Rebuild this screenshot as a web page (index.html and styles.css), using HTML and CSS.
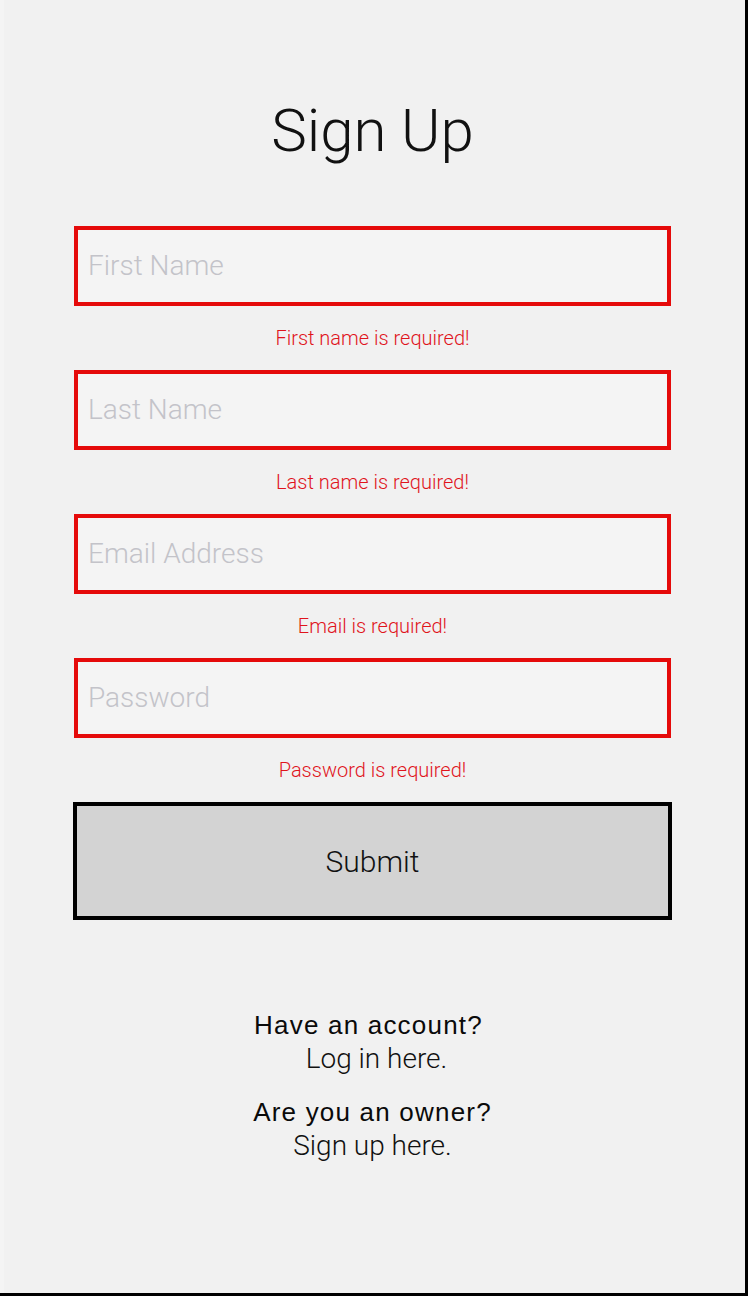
FILE: index.html
```html
<!DOCTYPE html>
<html lang="en">
<head>
<meta charset="utf-8">
<title>Sign Up</title>
<link rel="stylesheet" href="styles.css">
</head>
<body>
<div class="screen">
  <h1 class="title">Sign Up</h1>
  <form class="form" novalidate>
    <div class="field">
      <input class="input" type="text" placeholder="First Name">
      <p class="error">First name is required!</p>
    </div>
    <div class="field">
      <input class="input" type="text" placeholder="Last Name">
      <p class="error">Last name is required!</p>
    </div>
    <div class="field">
      <input class="input" type="email" placeholder="Email Address">
      <p class="error">Email is required!</p>
    </div>
    <div class="field">
      <input class="input" type="password" placeholder="Password">
      <p class="error">Password is required!</p>
    </div>
    <button class="submit" type="button">Submit</button>
  </form>
  <div class="links">
    <div class="link-group">
      <p class="question question-login">Have an account?</p>
      <a class="link link-login" href="#">Log in here.</a>
    </div>
    <div class="link-group">
      <p class="question">Are you an owner?</p>
      <a class="link" href="#">Sign up here.</a>
    </div>
  </div>
</div>
</body>
</html>
```
FILE: styles.css
```css
html, body {
  margin: 0;
  padding: 0;
  background: #000;
}
body {
  width: 748px;
  height: 1296px;
  overflow: hidden;
}
.screen {
  box-sizing: border-box;
  width: 745px;
  height: 1293px;
  background: #f1f1f1;
  border-left: 4px solid #f4f4f4;
  display: flex;
  flex-direction: column;
  align-items: center;
  font-family: Roboto, "Liberation Sans", sans-serif;
  font-weight: 300;
  color: #111;
}
.title {
  margin: 96px 0 0 0;
  font-size: 60px;
  line-height: 70px;
  font-weight: 300;
  color: #111;
  transform: translateX(-2px);
}
.form {
  margin-top: 60px;
  display: flex;
  flex-direction: column;
  align-items: center;
  width: 599px;
  transform: translateX(-2px);
}
.field {
  display: flex;
  flex-direction: column;
  align-items: center;
  width: 597px;
}
.input {
  box-sizing: border-box;
  width: 597px;
  height: 80px;
  margin: 0;
  border: 4px solid #e50a0a;
  background: #f4f4f4;
  padding: 0 10px 2px;
  font-family: Roboto, sans-serif;
  font-weight: 300;
  font-size: 28px;
  color: #111;
  outline: none;
  border-radius: 0;
}
.input::placeholder {
  color: #c3c3c9;
}
.error {
  margin: 0;
  height: 64px;
  line-height: 64px;
  font-size: 20px;
  font-weight: 300;
  color: #e0141c;
}
.submit {
  box-sizing: border-box;
  width: 599px;
  height: 118px;
  margin: 0;
  border: 4px solid #000;
  background: #d3d3d3;
  font-family: Roboto, sans-serif;
  font-weight: 300;
  font-size: 30px;
  color: #111;
  border-radius: 0;
  padding: 0;
}
.links {
  margin-top: 88px;
  display: flex;
  flex-direction: column;
  align-items: center;
  gap: 19px;
  transform: translateX(-2px);
}
.link-group {
  display: flex;
  flex-direction: column;
  align-items: center;
}
.question {
  margin: 0;
  font-family: "Liberation Sans", Arial, sans-serif;
  font-weight: 400;
  font-size: 26px;
  letter-spacing: 1.2px;
  line-height: 34px;
  color: #0a0a0a;
}
.question-login {
  padding-right: 8px;
}
.link {
  font-family: Roboto, sans-serif;
  font-weight: 300;
  font-size: 28px;
  line-height: 34px;
  color: #111;
  text-decoration: none;
}
.link-login {
  padding-left: 8px;
}
```
